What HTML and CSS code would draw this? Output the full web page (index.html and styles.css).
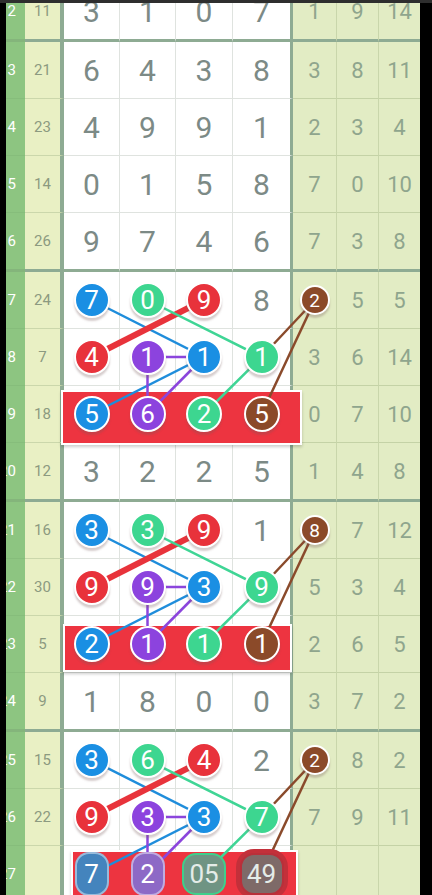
FILE: index.html
```html
<!DOCTYPE html>
<html lang="zh">
<head>
    <meta charset="UTF-8">
    <meta name="viewport" content="width=device-width, initial-scale=1.0">
    <title>走势图</title>
    <link rel="stylesheet" href="styles.css">
</head>
<body>

<div class="topbar"></div>

<div class="board">

    <div class="block">
        <div class="row last">
            <div class="cell num">12</div><div class="cell sum">11</div>
            <div class="cell d">3</div><div class="cell d">1</div><div class="cell d">0</div><div class="cell d c4">7</div>
            <div class="cell t">1</div><div class="cell t">9</div><div class="cell t t3">14</div>
        </div>
    </div>

    <div class="block">
        <div class="row">
            <div class="cell num">13</div><div class="cell sum">21</div>
            <div class="cell d">6</div><div class="cell d">4</div><div class="cell d">3</div><div class="cell d c4">8</div>
            <div class="cell t">3</div><div class="cell t">8</div><div class="cell t t3">11</div>
        </div>
        <div class="row">
            <div class="cell num">14</div><div class="cell sum">23</div>
            <div class="cell d">4</div><div class="cell d">9</div><div class="cell d">9</div><div class="cell d c4">1</div>
            <div class="cell t">2</div><div class="cell t">3</div><div class="cell t t3">4</div>
        </div>
        <div class="row">
            <div class="cell num">15</div><div class="cell sum">14</div>
            <div class="cell d">0</div><div class="cell d">1</div><div class="cell d">5</div><div class="cell d c4">8</div>
            <div class="cell t">7</div><div class="cell t">0</div><div class="cell t t3">10</div>
        </div>
        <div class="row last">
            <div class="cell num">16</div><div class="cell sum">26</div>
            <div class="cell d">9</div><div class="cell d">7</div><div class="cell d">4</div><div class="cell d c4">6</div>
            <div class="cell t">7</div><div class="cell t">3</div><div class="cell t t3">8</div>
        </div>
    </div>

    <!-- group 17-20 -->
    <div class="block">
        <div class="hit hit-a"></div>
        <svg class="links" width="414" height="230" viewBox="0 0 414 230">
            <polyline class="ln blue" points="85.5,28 198,85 85.5,142"/>
            <line class="ln red" x1="85.5" y1="85" x2="198" y2="28"/>
            <polyline class="ln green" points="141.5,28 255.5,85 198,142"/>
            <line class="ln purple" x1="141.5" y1="85" x2="198" y2="85"/>
            <line class="ln purple" x1="141.5" y1="85" x2="141.5" y2="142"/>
            <line class="ln purple" x1="198" y1="85" x2="141.5" y2="142"/>
            <line class="ln brown" x1="309" y1="28" x2="255.5" y2="85"/>
            <line class="ln brown" x1="309" y1="28" x2="255.5" y2="142"/>
        </svg>
        <div class="row">
            <div class="cell num">17</div><div class="cell sum">24</div>
            <div class="cell d"><span class="ball blue">7</span></div>
            <div class="cell d"><span class="ball green">0</span></div>
            <div class="cell d"><span class="ball red">9</span></div>
            <div class="cell d c4">8</div>
            <div class="cell t"><span class="ball small brown">2</span></div><div class="cell t">5</div><div class="cell t t3">5</div>
        </div>
        <div class="row">
            <div class="cell num">18</div><div class="cell sum">7</div>
            <div class="cell d"><span class="ball red">4</span></div>
            <div class="cell d"><span class="ball purple">1</span></div>
            <div class="cell d"><span class="ball blue">1</span></div>
            <div class="cell d c4"><span class="ball green">1</span></div>
            <div class="cell t">3</div><div class="cell t">6</div><div class="cell t t3">14</div>
        </div>
        <div class="row">
            <div class="cell num">19</div><div class="cell sum">18</div>
            <div class="cell d"><span class="ball blue">5</span></div>
            <div class="cell d"><span class="ball purple">6</span></div>
            <div class="cell d"><span class="ball green">2</span></div>
            <div class="cell d c4"><span class="ball brown">5</span></div>
            <div class="cell t">0</div><div class="cell t">7</div><div class="cell t t3">10</div>
        </div>
        <div class="row last">
            <div class="cell num">20</div><div class="cell sum">12</div>
            <div class="cell d">3</div><div class="cell d">2</div><div class="cell d">2</div><div class="cell d c4">5</div>
            <div class="cell t">1</div><div class="cell t">4</div><div class="cell t t3">8</div>
        </div>
    </div>

    <!-- group 21-24 -->
    <div class="block">
        <div class="hit hit-b"></div>
        <svg class="links" width="414" height="230" viewBox="0 0 414 230">
            <polyline class="ln blue" points="85.5,28 198,85 85.5,142"/>
            <line class="ln red" x1="85.5" y1="85" x2="198" y2="28"/>
            <polyline class="ln green" points="141.5,28 255.5,85 198,142"/>
            <line class="ln purple" x1="141.5" y1="85" x2="198" y2="85"/>
            <line class="ln purple" x1="141.5" y1="85" x2="141.5" y2="142"/>
            <line class="ln purple" x1="198" y1="85" x2="141.5" y2="142"/>
            <line class="ln brown" x1="309" y1="28" x2="255.5" y2="85"/>
            <line class="ln brown" x1="309" y1="28" x2="255.5" y2="142"/>
        </svg>
        <div class="row">
            <div class="cell num">21</div><div class="cell sum">16</div>
            <div class="cell d"><span class="ball blue">3</span></div>
            <div class="cell d"><span class="ball green">3</span></div>
            <div class="cell d"><span class="ball red">9</span></div>
            <div class="cell d c4">1</div>
            <div class="cell t"><span class="ball small brown">8</span></div><div class="cell t">7</div><div class="cell t t3">12</div>
        </div>
        <div class="row">
            <div class="cell num">22</div><div class="cell sum">30</div>
            <div class="cell d"><span class="ball red">9</span></div>
            <div class="cell d"><span class="ball purple">9</span></div>
            <div class="cell d"><span class="ball blue">3</span></div>
            <div class="cell d c4"><span class="ball green">9</span></div>
            <div class="cell t">5</div><div class="cell t">3</div><div class="cell t t3">4</div>
        </div>
        <div class="row">
            <div class="cell num">23</div><div class="cell sum">5</div>
            <div class="cell d"><span class="ball blue">2</span></div>
            <div class="cell d"><span class="ball purple">1</span></div>
            <div class="cell d"><span class="ball green">1</span></div>
            <div class="cell d c4"><span class="ball brown">1</span></div>
            <div class="cell t">2</div><div class="cell t">6</div><div class="cell t t3">5</div>
        </div>
        <div class="row last">
            <div class="cell num">24</div><div class="cell sum">9</div>
            <div class="cell d">1</div><div class="cell d">8</div><div class="cell d">0</div><div class="cell d c4">0</div>
            <div class="cell t">3</div><div class="cell t">7</div><div class="cell t t3">2</div>
        </div>
    </div>

    <!-- group 25-27 -->
    <div class="block">
        <div class="hit hit-c"></div>
        <svg class="links" width="414" height="230" viewBox="0 0 414 230">
            <polyline class="ln blue" points="85.5,28 198,85 85.5,142"/>
            <line class="ln red" x1="85.5" y1="85" x2="198" y2="28"/>
            <polyline class="ln green" points="141.5,28 255.5,85 198,142"/>
            <line class="ln purple" x1="141.5" y1="85" x2="198" y2="85"/>
            <line class="ln purple" x1="141.5" y1="85" x2="141.5" y2="142"/>
            <line class="ln purple" x1="198" y1="85" x2="141.5" y2="142"/>
            <line class="ln brown" x1="309" y1="28" x2="255.5" y2="85"/>
            <line class="ln brown" x1="309" y1="28" x2="255.5" y2="142"/>
        </svg>
        <div class="row">
            <div class="cell num">25</div><div class="cell sum">15</div>
            <div class="cell d"><span class="ball blue">3</span></div>
            <div class="cell d"><span class="ball green">6</span></div>
            <div class="cell d"><span class="ball red">4</span></div>
            <div class="cell d c4">2</div>
            <div class="cell t"><span class="ball small brown">2</span></div><div class="cell t">8</div><div class="cell t t3">2</div>
        </div>
        <div class="row">
            <div class="cell num">26</div><div class="cell sum">22</div>
            <div class="cell d"><span class="ball red">9</span></div>
            <div class="cell d"><span class="ball purple">3</span></div>
            <div class="cell d"><span class="ball blue">3</span></div>
            <div class="cell d c4"><span class="ball green">7</span></div>
            <div class="cell t">7</div><div class="cell t">9</div><div class="cell t t3">11</div>
        </div>
        <div class="row">
            <div class="cell num">27</div><div class="cell sum"></div>
            <div class="cell d"><span class="ghost g-blue">7</span></div>
            <div class="cell d"><span class="ghost g-purple">2</span></div>
            <div class="cell d"><span class="ghost wide g-green">05</span></div>
            <div class="cell d c4"><span class="ghost wide g-brown">49</span></div>
            <div class="cell t"></div><div class="cell t"></div><div class="cell t t3"></div>
        </div>
    </div>

</div>

</body>
</html>
```

FILE: styles.css
```css
body {
    margin: 0;
    background: #000;
    overflow: hidden;
    font-family: Roboto, "Noto Sans", sans-serif;
}

.topbar {
    position: fixed;
    top: 0;
    left: 0;
    right: 0;
    height: 3px;
    background: #2e2e2e;
    z-index: 10;
}

.board {
    margin: -17px 0 0 6px;
    width: 414px;
}

.block {
    position: relative;
}

.row {
    display: grid;
    grid-template-columns: 19px 39px 56px 56px 57px 60px 44px 42px 41px;
    height: 57px;
}

.row.last {
    height: 59px;
}

.cell {
    box-sizing: border-box;
    display: flex;
    align-items: center;
    justify-content: center;
    border-right: 1px solid #dfe3df;
    border-bottom: 1px solid #dfe3df;
}

.row.last .cell {
    border-bottom: 3px solid #8eab93;
}

/* period number, first digit scrolled off */
.num {
    display: block;
    background: #8dc581;
    color: #fff;
    font-size: 15px;
    line-height: 56px;
    text-indent: -7px;
    white-space: nowrap;
    overflow: hidden;
    border-right: none;
    border-bottom-color: #86bd7b;
}

.row.last .num {
    border-bottom-color: #84b57b;
}

.sum {
    background: #e9f0c4;
    color: #8c9a80;
    font-size: 15px;
    border-right: 4px solid #8eab93;
    border-bottom-color: #cbd7ab;
}

.d {
    background: #fff;
    color: #7c8a86;
    font-size: 30px;
}

.d.c4 {
    border-right: 3px solid #8eab93;
}

.t {
    background: #e2ecc4;
    color: #8fa58d;
    font-size: 22px;
    border-right-color: #c9d6ab;
    border-bottom-color: #c4d2a6;
}

.t.t3 {
    border-right: none;
}

/* highlighted draw row */
.hit {
    position: absolute;
    z-index: 1;
    box-sizing: border-box;
    background: #ed3440;
    border: 2px solid #fff;
    box-shadow: 0 2px 3px rgba(0, 0, 0, 0.2);
}

.hit-a {
    left: 55px;
    top: 118px;
    width: 241px;
    height: 55px;
}

.hit-b {
    left: 57px;
    top: 122px;
    width: 229px;
    height: 48px;
}

.hit-c {
    left: 65px;
    top: 118px;
    width: 227px;
    height: 60px;
}

.links {
    position: absolute;
    top: 0;
    left: 0;
    z-index: 2;
    pointer-events: none;
}

.ln {
    fill: none;
    stroke-width: 2.5;
}

.ln.blue { stroke: #1f8ddb; }
.ln.red { stroke: #e8333b; stroke-width: 6; }
.ln.green { stroke: #3fd595; }
.ln.purple { stroke: #8b45dc; }
.ln.brown { stroke: #8a4a2b; }

.ball {
    position: relative;
    z-index: 3;
    box-sizing: border-box;
    width: 36px;
    height: 36px;
    border: 2.5px solid #fff;
    border-radius: 50%;
    display: flex;
    align-items: center;
    justify-content: center;
    color: #fff;
    font-size: 26px;
    box-shadow: 0 3px 2px rgba(120, 90, 90, 0.3);
}

.ball.small {
    width: 30px;
    height: 30px;
    border-width: 2px;
    font-size: 19px;
}

.ball.blue { background: #1a8fe3; }
.ball.green { background: #3dd690; }
.ball.red { background: #e8323b; }
.ball.purple { background: #8c43de; }
.ball.brown { background: #8b4a29; }

/* balls still sliding into the draw row */
.ghost {
    position: relative;
    z-index: 3;
    box-sizing: border-box;
    width: 34px;
    height: 44px;
    border-radius: 14px;
    display: flex;
    align-items: center;
    justify-content: center;
    color: #fff;
    font-size: 26px;
    border: 2px solid rgba(255, 255, 255, 0.45);
}

.ghost.wide {
    width: 44px;
    height: 42px;
    color: #e4ece8;
}

.g-blue { background: #4484bd; }
.g-purple { background: #8d69c6; }
.g-green { background: #6f9483; border-color: #3fcf8c; }
.g-brown { background: #7e6a68; border-color: #b8303a; box-shadow: 0 0 0 4px #c3303a; }
```
